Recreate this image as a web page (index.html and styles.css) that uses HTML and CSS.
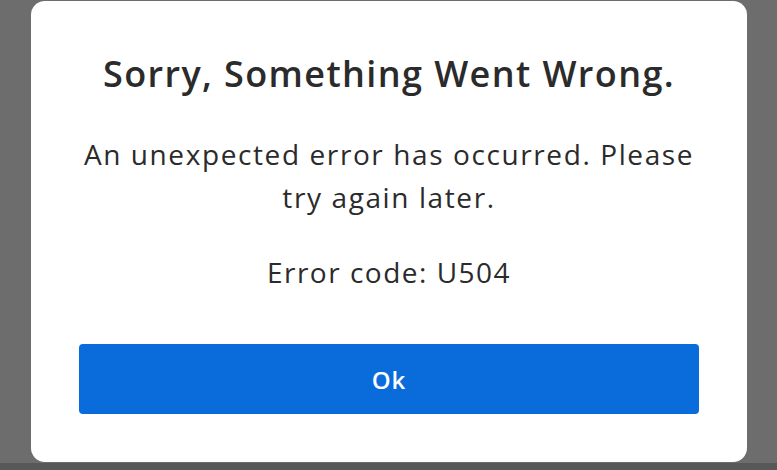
FILE: index.html
```html
<!DOCTYPE html>
<html lang="en">
<head>
    <meta charset="UTF-8">
    <meta name="viewport" content="width=device-width, initial-scale=1.0">
    <title>Error</title>
    <link rel="stylesheet" href="styles.css">
</head>
<body>
    <div class="dialog">
        <h1 class="title">Sorry, Something Went Wrong.</h1>
        <p class="message">An unexpected error has occurred. Please try again later.</p>
        <p class="code">Error code: U504</p>
        <button class="ok-button">Ok</button>
    </div>
</body>
</html>
```

FILE: styles.css
```css
html {
    background-color: #6d6d6d;
}
body {
    font-family: "Open Sans", Lato, sans-serif;
    background-color: #6d6d6d;
    border-bottom: 7px solid #585858;
    margin: 0;
    padding: 1px 30px 0 31px;
    height: 470px;
    box-sizing: border-box;
    overflow: hidden;
}
.dialog {
    background-color: #ffffff;
    border-radius: 14px;
    height: 461px;
    box-sizing: border-box;
    padding: 0 48px;
    display: flex;
    flex-direction: column;
    align-items: center;
    color: #2b2b2b;
    text-align: center;
}
.title {
    font-size: 36px;
    font-weight: 600;
    letter-spacing: 1.4px;
    margin: 50px 0 0;
    line-height: 46px;
}
.message {
    font-size: 28px;
    letter-spacing: 1.6px;
    line-height: 43px;
    max-width: 640px;
    margin: 36px 0 0;
}
.code {
    font-size: 28px;
    letter-spacing: 1.5px;
    line-height: 43px;
    margin: 32px 0 0;
}
.ok-button {
    width: 100%;
    height: 70px;
    margin-top: 50px;
    background-color: #0a6bdb;
    color: #ffffff;
    border: none;
    border-radius: 4px;
    font-family: inherit;
    font-size: 24px;
    font-weight: 600;
    letter-spacing: 1px;
}
```
